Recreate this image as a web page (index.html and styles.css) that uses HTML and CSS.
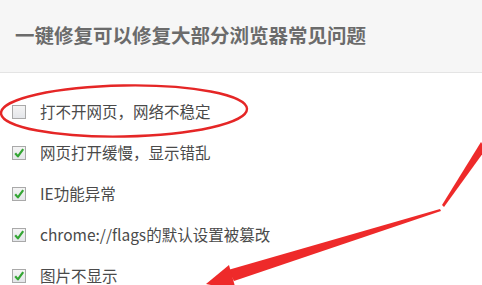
FILE: index.html
```html
<!DOCTYPE html>
<html lang="zh-CN">
<head>
<meta charset="utf-8">
<link rel="stylesheet" href="styles.css">
</head>
<body>
<div class="page">
  <div class="header">
    <h1 class="title">一键修复可以修复大部分浏览器常见问题</h1>
  </div>
  <ul class="list">
    <li class="item"><span class="box"></span><span class="label">打不开网页，网络不稳定</span></li>
    <li class="item"><span class="box"><svg viewBox="0 0 12 12" width="12" height="12"><path d="M2.2 6.2 L4.9 9.4 L10.2 2.2" fill="none" stroke="#33a533" stroke-width="2.2" stroke-linejoin="round"/></svg></span><span class="label">网页打开缓慢，显示错乱</span></li>
    <li class="item"><span class="box"><svg viewBox="0 0 12 12" width="12" height="12"><path d="M2.2 6.2 L4.9 9.4 L10.2 2.2" fill="none" stroke="#33a533" stroke-width="2.2" stroke-linejoin="round"/></svg></span><span class="label">IE功能异常</span></li>
    <li class="item"><span class="box"><svg viewBox="0 0 12 12" width="12" height="12"><path d="M2.2 6.2 L4.9 9.4 L10.2 2.2" fill="none" stroke="#33a533" stroke-width="2.2" stroke-linejoin="round"/></svg></span><span class="label">chrome://flags的默认设置被篡改</span></li>
    <li class="item"><span class="box"><svg viewBox="0 0 12 12" width="12" height="12"><path d="M2.2 6.2 L4.9 9.4 L10.2 2.2" fill="none" stroke="#33a533" stroke-width="2.2" stroke-linejoin="round"/></svg></span><span class="label">图片不显示</span></li>
  </ul>
  <svg class="marks" width="482" height="285" viewBox="0 0 482 285">
    <ellipse cx="124" cy="111" rx="123" ry="25.5" fill="none" stroke="#e52626" stroke-width="2.4" transform="rotate(-1 124 111)"/>
    <polygon points="481,142 486,149 444,207 442,205" fill="#ee2a2a"/>
    <polygon points="440,209 441,211 234,281 228,270" fill="#ee2a2a"/>
    <polygon points="206,284 229,265 236,290" fill="#ee2a2a"/>
  </svg>
</div>
</body>
</html>
```
FILE: styles.css
```css
* { box-sizing: border-box; }
html, body { margin: 0; padding: 0; background: #fff; }
body { font-family: "Noto Sans CJK SC", "Liberation Sans", sans-serif; overflow: hidden; }
.page { position: relative; width: 482px; height: 285px; overflow: hidden; }
.header {
  height: 73px;
  background: #f6f6f6;
  border-bottom: 1px solid #e4e4e4;
  display: flex;
  align-items: center;
  padding-left: 15px;
}
.title {
  margin: 0;
  font-size: 19.5px;
  font-weight: bold;
  color: #6b6b6b;
  letter-spacing: 0;
  line-height: 1;
  padding-bottom: 2px;
}
.list { list-style: none; margin: 0; padding: 18px 0 0 12px; }
.item {
  height: 41px;
  display: flex;
  align-items: center;
  gap: 14px;
}
.box {
  width: 14px;
  height: 14px;
  border: 1px solid #a9a9a9;
  background: linear-gradient(#f4f4f4, #e4e6ea);
  display: flex;
  align-items: center;
  justify-content: center;
  flex: none;
}
.box svg { display: block; }
.label {
  font-size: 15.5px;
  color: #4a4a4a;
  line-height: 1;
}
.marks { position: absolute; left: 0; top: 0; pointer-events: none; }
```
